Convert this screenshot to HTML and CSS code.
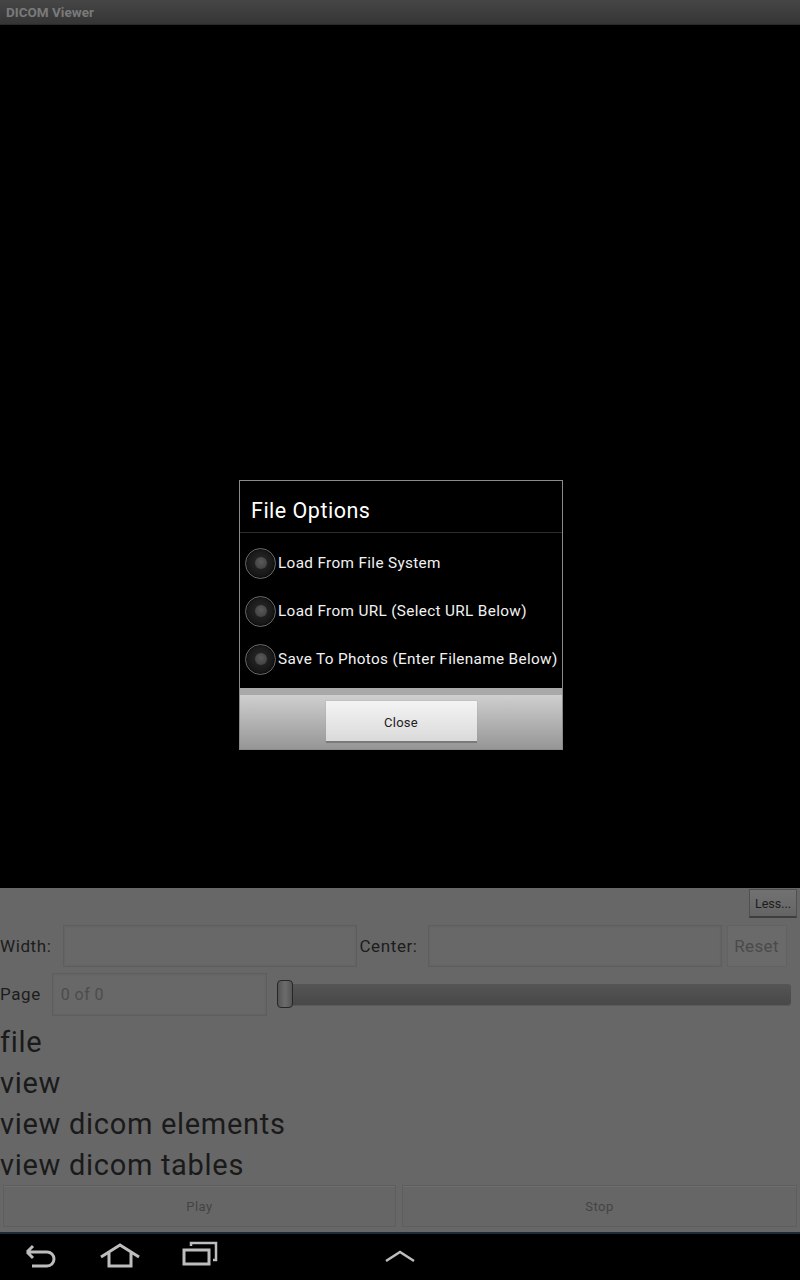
FILE: index.html
```html
<!DOCTYPE html>
<html>
<head>
<meta charset="utf-8">
<link rel="stylesheet" href="styles.css">
</head>
<body>
<div class="screen">
  <div class="titlebar">DICOM Viewer</div>
  <div class="canvas">
    <div class="dialog">
      <div class="dlg-title">File Options</div>
      <div class="dlg-list">
        <div class="opt"><span class="radio"><span class="dot"></span></span><span class="opt-text">Load From File System</span></div>
        <div class="opt"><span class="radio"><span class="dot"></span></span><span class="opt-text">Load From URL (Select URL Below)</span></div>
        <div class="opt"><span class="radio"><span class="dot"></span></span><span class="opt-text">Save To Photos (Enter Filename Below)</span></div>
      </div>
      <div class="dlg-buttons">
        <div class="close-btn">Close</div>
      </div>
    </div>
  </div>
  <div class="panel">
    <div class="less-row"><div class="less-btn">Less...</div></div>
    <div class="wc-row">
      <span class="lbl">Width:</span>
      <div class="field f-width"></div>
      <span class="lbl lbl-center">Center:</span>
      <div class="field f-center"></div>
      <div class="reset-btn">Reset</div>
    </div>
    <div class="page-row">
      <span class="lbl">Page</span>
      <div class="field f-page">0 of 0</div>
      <div class="slider"><div class="thumb"></div><div class="track"></div></div>
    </div>
    <div class="menu">
      <div class="item">file</div>
      <div class="item">view</div>
      <div class="item">view dicom elements</div>
      <div class="item">view dicom tables</div>
    </div>
    <div class="play-row">
      <div class="pbtn">Play</div>
      <div class="pbtn">Stop</div>
    </div>
  </div>
  <div class="navbar">
    <svg class="ic ic-back" width="36" height="28" viewBox="0 0 36 28">
      <path d="M4 9 L10 3 M4 9 L10 15 M4 9 H24 a7 7 0 0 1 0 14 H9" fill="none" stroke="#bdbdbd" stroke-width="3"/>
    </svg>
    <svg class="ic ic-home" width="42" height="28" viewBox="0 0 42 28">
      <path d="M2 16 L21 4 L40 16 M10 12 V25 H32 V12" fill="none" stroke="#bdbdbd" stroke-width="3" stroke-linejoin="miter"/>
    </svg>
    <svg class="ic ic-recent" width="38" height="28" viewBox="0 0 38 28">
      <path d="M10 6 V3 H35 V20 H32" fill="none" stroke="#bdbdbd" stroke-width="2.5"/>
      <rect x="3" y="10" width="25" height="14" fill="none" stroke="#bdbdbd" stroke-width="3"/>
    </svg>
    <svg class="ic ic-up" width="32" height="20" viewBox="0 0 32 20">
      <path d="M2 14 L16 5 L30 14" fill="none" stroke="#bdbdbd" stroke-width="2.5"/>
    </svg>
  </div>
</div>
</body>
</html>
```
FILE: styles.css
```css
* { box-sizing: border-box; }
html, body { margin: 0; padding: 0; background: #000; }
body { font-family: Roboto, "Noto Sans", sans-serif; }
.screen { width: 800px; height: 1280px; display: flex; flex-direction: column; overflow: hidden; }

.titlebar {
  height: 25px; flex: none;
  background: linear-gradient(#464646, #353535);
  color: #7a7a7a; font-size: 13.5px; font-weight: bold;
  padding-left: 6px; line-height: 24px;
  border-bottom: 1px solid #2a2a2a;
}

.canvas {
  height: 863px; flex: none; background: #000;
  display: flex; justify-content: center; align-items: flex-start;
  padding-top: 455px; padding-left: 2px;
}

.dialog {
  width: 324px; height: 270px;
  border: 1px solid #8a8a8a;
  background: #000;
  display: flex; flex-direction: column;
}
.dlg-title {
  height: 52px; flex: none;
  color: #fff; font-size: 21.5px; letter-spacing: 0.5px;
  padding-left: 11px; line-height: 60px;
  border-bottom: 1px solid #2e2e2e;
}
.dlg-list { padding-top: 6px; flex: 1; }
.opt { height: 48px; display: flex; align-items: center; padding-left: 5px; }
.radio {
  width: 31px; height: 31px; border-radius: 50%;
  border: 1px solid #6a6a6a;
  background: radial-gradient(circle at 50% 45%, #2c2c2c, #141414 70%);
  display: flex; align-items: center; justify-content: center;
  box-shadow: inset 0 0 2px #000;
}
.dot { width: 12px; height: 12px; border-radius: 50%; background: radial-gradient(circle at 50% 40%, #5a5a5a, #3a3a3a); }
.opt-text { color: #f2f2f2; font-size: 15.3px; letter-spacing: 0.35px; margin-left: 2px; }

.dlg-buttons {
  height: 61px; flex: none;
  border-top: 7px solid #a9a9a9;
  background: linear-gradient(#cfcfcf, #969696);
  display: flex; justify-content: center; align-items: flex-start;
  padding-top: 6px;
}
.close-btn {
  width: 151px; height: 42px;
  background: linear-gradient(#f4f4f4, #dadada);
  border-bottom: 2px solid #7a7a7a;
  box-shadow: 0 0 1px #999;
  color: #222; font-size: 13px; letter-spacing: 0.3px;
  display: flex; align-items: center; justify-content: center;
  padding-top: 2px;
}

.panel {
  height: 344px; flex: none;
  background: #676767;
  display: flex; flex-direction: column;
}
.less-row { display: flex; justify-content: flex-end; padding-right: 3px; padding-top: 1px; height: 36px; }
.less-btn {
  width: 48px; height: 29px;
  border: 1px solid #505050; border-bottom: 2px solid #3e3e3e;
  background: linear-gradient(#727272, #646464);
  color: #1c1c1c; font-size: 12.5px;
  display: flex; align-items: center; justify-content: center;
}
.lbl { color: #1c1c1c; font-size: 17px; letter-spacing: 0.6px; }
.wc-row { display: flex; align-items: center; height: 44px; margin-top: 0; }
.field {
  border: 1px solid #5e5e5e;
  background: #686868;
  box-shadow: inset 0 0 2px #5c5c5c;
}
.f-width { width: 294px; height: 42px; margin-left: 12px; }
.lbl-center { margin-left: 2px; }
.f-center { width: 294px; height: 42px; margin-left: 10px; }
.reset-btn {
  width: 60px; height: 42px; margin-left: 5px;
  background: #6a6a6a; border: 1px solid #626262;
  color: #4a4a4a; font-size: 17px; letter-spacing: 0.4px;
  display: flex; align-items: center; justify-content: center;
}
.page-row { display: flex; align-items: center; height: 48px; margin-top: 2px; }
.f-page { width: 215px; height: 43px; margin-left: 11px; color: #4c4c4c; font-size: 16px; letter-spacing: 0.4px; line-height: 41px; padding-left: 8px; }
.slider { display: flex; align-items: center; margin-left: 10px; width: 514px; position: relative; height: 28px; }
.thumb {
  position: absolute; left: 0; top: 0;
  width: 16px; height: 28px; border-radius: 4px;
  border: 1px solid #262626;
  background: linear-gradient(90deg, #555, #6c6c6c 50%, #555);
  z-index: 1;
}
.track {
  margin-left: 4px; flex: 1; height: 21px; border-radius: 3px;
  background: linear-gradient(#555, #484848);
  box-shadow: 0 1px 0 #5a5a5a;
}
.menu { margin-top: 4px; }
.item { color: #1a1a1a; font-size: 29px; letter-spacing: 0.7px; height: 41px; line-height: 40px; }
.play-row { display: flex; gap: 6px; padding: 0 3px; margin-top: -1px; }
.pbtn {
  flex: 1; height: 42px;
  background: #666; border: 1px solid #5e5e5e;
  box-shadow: inset 0 1px 0 #6e6e6e;
  color: #444; font-size: 13px; letter-spacing: 0.5px;
  display: flex; align-items: center; justify-content: center;
}
.play-row .pbtn:last-child { flex: 0 0 395px; }

.navbar {
  flex: 1; background: #000;
  border-top: 2px solid #1e2c36;
  position: relative;
}
.ic { position: absolute; }
.ic-back { left: 23px; top: 9px; }
.ic-home { left: 99px; top: 7px; }
.ic-recent { left: 181px; top: 6px; }
.ic-up { left: 384px; top: 13px; }
```
